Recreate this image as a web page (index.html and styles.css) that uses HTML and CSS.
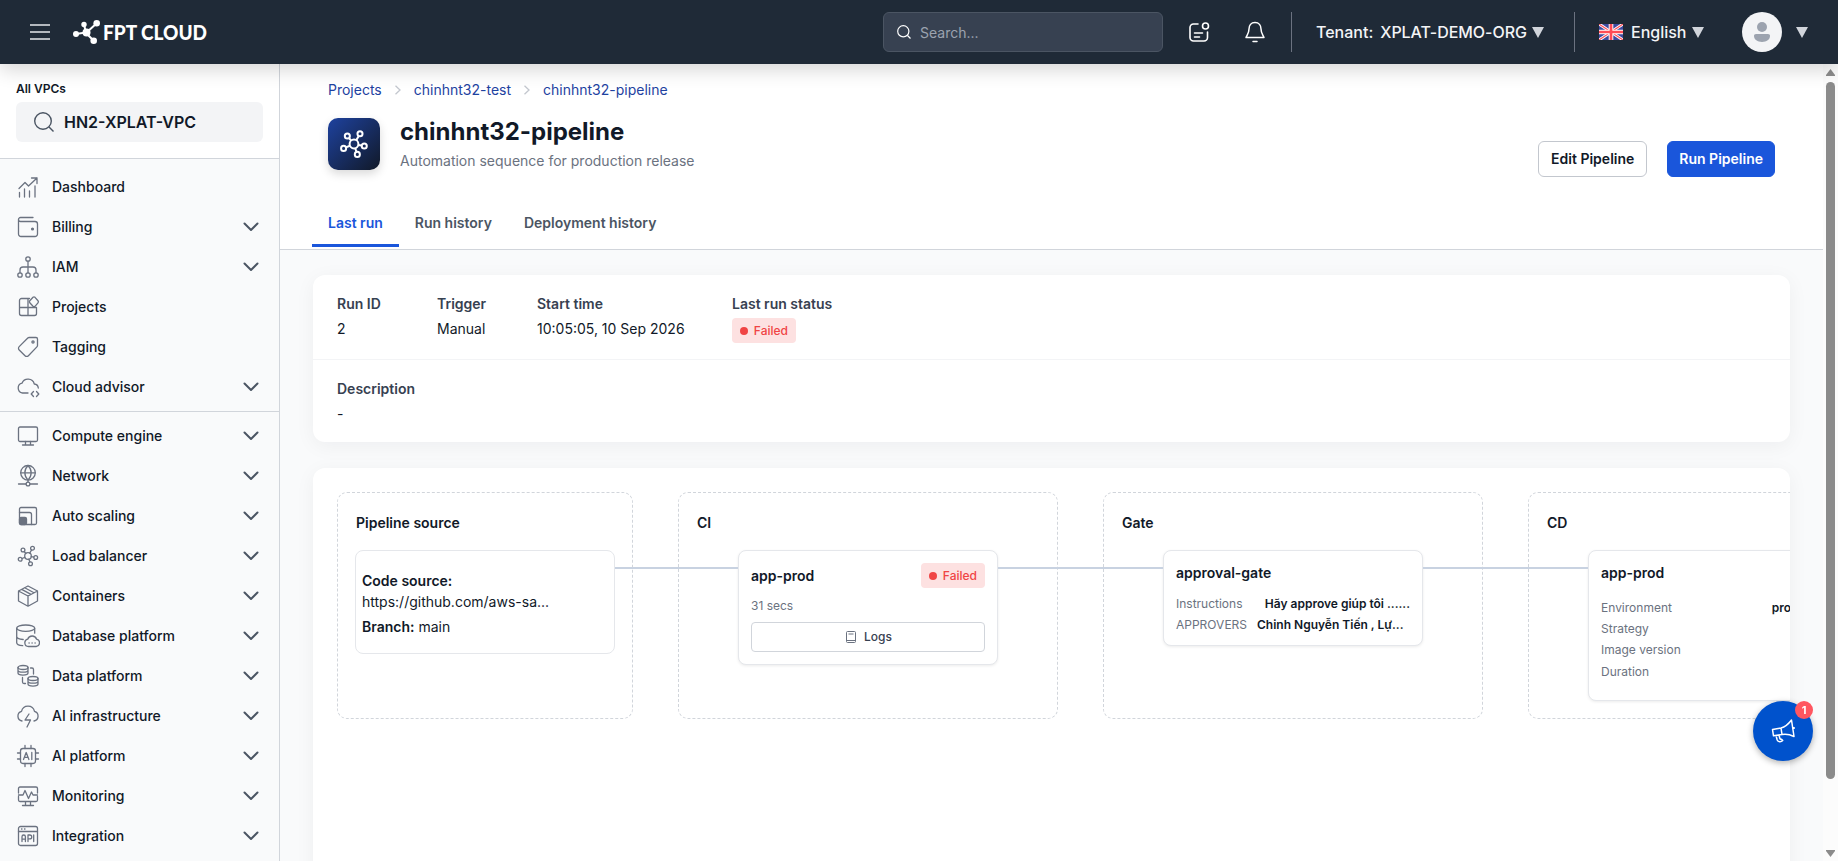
FILE: index.html
```
<!DOCTYPE html>
<html lang="en">

<head>
  <meta charset="UTF-8">
  <meta name="viewport" content="width=device-width, initial-scale=1.0">
  <title>chinhnt32-pipeline - FPT Cloud</title>
  <link rel="stylesheet" href="styles.css">
</head>

<body>
  <!-- Shared icons -->
  <svg class="sprite" width="0" height="0">
    <symbol id="chevron" viewBox="0 0 16 10"><path d="M1.500 1.500L8 8l6.500-6.500" fill="none" stroke="currentColor" stroke-width="2" stroke-linecap="round" stroke-linejoin="round"/></symbol>
    <symbol id="caret" viewBox="0 0 12 11"><path d="M0 0h12L6 11z" fill="currentColor"/></symbol>
    <symbol id="crumb" viewBox="0 0 8 10"><path d="M1.500 .8L6 5 1.500 9.200" fill="none" stroke="currentColor" stroke-width="1.300"/></symbol>
    <symbol id="hub" viewBox="0 0 24 24">
      <g fill="none" stroke="currentColor">
        <circle cx="12" cy="12" r="3.300"/><circle cx="7" cy="6" r="1.900"/><circle cx="16.500" cy="4.300" r="1.900"/><circle cx="19.700" cy="13.500" r="1.900"/><circle cx="14.500" cy="19.800" r="1.900"/><circle cx="4.200" cy="15.300" r="1.900"/>
        <path d="M8.200 7.500l1.700 2M15.600 6l-1.900 3.100M15.200 12.700l2.600.5M12.900 15.200l1 2.800M8.900 13.300l-2.900 1.200"/>
      </g>
    </symbol>
  </svg>

  <header class="topbar">
    <button class="menu-btn" aria-label="Menu">
      <svg width="20" height="16" viewBox="0 0 20 16" fill="none" stroke="#e5e7eb" stroke-width="1.300"><path d="M0 1h20M0 8h20M0 15h20"/></svg>
    </button>
    <a class="logo">
      <svg width="28" height="24" viewBox="0 0 28 24" fill="#fff" stroke="#fff">
        <circle cx="13.500" cy="12.500" r="4" stroke="none"/><circle cx="3" cy="14" r="3" stroke="none"/><circle cx="11" cy="4.500" r="2.700" stroke="none"/><circle cx="23.700" cy="3.300" r="3.300" stroke="none"/><circle cx="20.700" cy="20.700" r="3.300" stroke="none"/>
        <path d="M3 14l10-1.500L11 4.500M13 13L23.700 3.300M13 13l7.700 7.700" fill="none" stroke-width="2"/>
      </svg>
      <svg width="112" height="28" viewBox="0 0 112 28"><text class="logo-text" x="0" y="22" textLength="104" lengthAdjust="spacingAndGlyphs">FPT CLOUD</text></svg>
    </a>
    <div class="top-search">
      <svg width="14" height="14" viewBox="0 0 14 14" fill="none" stroke="#fff" stroke-width="1.200"><circle cx="6.300" cy="6.300" r="5.600"/><path d="M10.500 10.500l3 3"/></svg>
      <span>Search...</span>
    </div>
    <svg class="top-note" width="22" height="22" viewBox="0 0 22 22" fill="none" stroke="#fff" stroke-width="1.600" stroke-linecap="round">
      <path d="M10 3H5.500A3.500 3.500 0 0 0 2 6.500v10A3.500 3.500 0 0 0 5.500 20H16a3.500 3.500 0 0 0 3.500-3.500V11M6.500 12h8M6.500 16h5"/><circle cx="17.500" cy="5" r="3"/>
    </svg>
    <svg class="top-bell" width="22" height="22" viewBox="0 0 22 22" fill="none" stroke="#fff" stroke-width="1.500" stroke-linecap="round" stroke-linejoin="round">
      <path d="M11 1.500C7 1.500 5 4.500 5 8c0 4-1.500 5.500-3 8.500h18c-1.500-3-3-4.500-3-8.500 0-3.500-2-6.500-6-6.500zM9 20.500h4"/>
    </svg>
    <div class="tenant">
      <span>Tenant:</span>
      <span class="tenant-name">XPLAT-DEMO-ORG</span>
      <svg class="caret" width="12" height="11"><use href="#caret"/></svg>
    </div>
    <div class="lang">
      <svg width="24" height="16" viewBox="0 0 24 16">
        <path d="M0 0h24v16H0z" fill="#3d4a9e"/>
        <path d="M0 0l24 16M24 0L0 16" stroke="#fff" stroke-width="3"/><path d="M0 0l24 16M24 0L0 16" stroke="#ff4b55" stroke-width="1.100"/>
        <path d="M12 0v16M0 8h24" stroke="#fff" stroke-width="4.600"/><path d="M12 0v16M0 8h24" stroke="#ff4b55" stroke-width="2.700"/>
      </svg>
      <span>English</span>
      <svg class="caret" width="12" height="11"><use href="#caret"/></svg>
    </div>
    <div class="avatar">
      <svg width="16" height="20" viewBox="0 0 16 20" fill="#9ca3af"><circle cx="8" cy="5" r="5"/><path d="M2 12h12c1.200 0 2 .7 2 1.800 0 4-3.500 6.200-8 6.200s-8-2.200-8-6.200C0 12.700.8 12 2 12z"/></svg>
    </div>
    <svg class="caret" width="12" height="11"><use href="#caret"/></svg>
  </header>

  <div class="layout">
    <aside class="sidebar">
      <div class="vpc">
        <div class="vpc-label">All VPCs</div>
        <div class="vpc-select">
          <svg width="20" height="20" viewBox="0 0 20 20" fill="none" stroke="#4b5563" stroke-width="1.400"><circle cx="9" cy="9" r="8.300"/><path d="M15 15l4.500 4.500"/></svg>
          <span>HN2-XPLAT-VPC</span>
        </div>
      </div>
      <ul class="nav">
        <li><svg class="ico" viewBox="0 0 24 24"><path d="M3.500 22v-4.500M8.500 22v-8M13.500 22v-6M19 22V11M3 13.500l6-6 3.500 3.500L21 3M15.500 3H21v5.500"/></svg><span>Dashboard</span></li>
        <li><svg class="ico" viewBox="0 0 24 24"><path d="M17 2.500H4.500a2 2 0 0 0 0 4H19a2.500 2.500 0 0 1 2.500 2.500v10a2.500 2.500 0 0 1-2.500 2.500H5A2.500 2.500 0 0 1 2.500 19V4.500"/><circle cx="16.500" cy="14" r=".9" fill="currentColor"/></svg><span>Billing</span><svg class="chev"><use href="#chevron"/></svg></li>
        <li><svg class="ico" viewBox="0 0 24 24"><circle cx="12" cy="4" r="2.200"/><circle cx="4" cy="20" r="2.200"/><circle cx="12" cy="20" r="2.200"/><circle cx="20" cy="20" r="2.200"/><path d="M12 6.200v11.600M4 17.800V15a3 3 0 0 1 3-3h10a3 3 0 0 1 3 3v2.800"/></svg><span>IAM</span><svg class="chev"><use href="#chevron"/></svg></li>
        <li><svg class="ico" viewBox="0 0 24 24"><path d="M13.500 3.500h-8a2 2 0 0 0-2 2v13a2 2 0 0 0 2 2h13a2 2 0 0 0 2-2V12.500h-17M12 3.500v17"/><path d="M17 2.300l-3.200 3.500a1.500 1.500 0 0 0 0 2l3.200 3.500a1.500 1.500 0 0 0 2 0l3-3.500a1.500 1.500 0 0 0 0-2l-3-3.500a1.500 1.500 0 0 0-2 0z" fill="#f9fafb"/></svg><span>Projects</span></li>
        <li><svg class="ico" viewBox="0 0 24 24"><path d="M13.200 2.500H20A1.500 1.500 0 0 1 21.500 4v6.500a2 2 0 0 1-.6 1.400l-8.500 8.800a2.400 2.400 0 0 1-3.400 0L3.200 15a2.400 2.400 0 0 1 0-3.400L11.800 3a2 2 0 0 1 1.400-.5z"/><circle cx="17" cy="7" r="1.100"/></svg><span>Tagging</span></li>
        <li><svg class="ico" viewBox="0 0 24 24"><path d="M12 18H6.500A5 5 0 0 1 6 8.200 6.500 6.500 0 0 1 18.300 9a4.500 4.500 0 0 1 4 4M17.500 16.500l-2.300 2.500 2.300 2.500M20.500 16.500l2.300 2.500-2.300 2.500"/></svg><span>Cloud advisor</span><svg class="chev"><use href="#chevron"/></svg></li>
      </ul>
      <ul class="nav services">
        <li><svg class="ico" viewBox="0 0 24 24"><rect x="2.500" y="3" width="19" height="14.500" rx="1.500"/><path d="M9.500 17.500V21M14.500 17.500V21M6.500 21h11"/></svg><span>Compute engine</span><svg class="chev"><use href="#chevron"/></svg></li>
        <li><svg class="ico" viewBox="0 0 24 24"><circle cx="12" cy="8.800" r="7.300"/><path d="M4.700 8.800h14.600M12 1.500c-4.200 4.200-4.200 10.400 0 14.600M12 1.500c4.200 4.200 4.200 10.400 0 14.600M12 16.100v2M2.500 20H10M14 20h7.500"/><circle cx="12" cy="20" r="1.900"/></svg><span>Network</span><svg class="chev"><use href="#chevron"/></svg></li>
        <li><svg class="ico" viewBox="0 0 24 24"><rect x="3.500" y="3.500" width="17" height="17" rx="1.500"/><path d="M3.500 8.500h10a2 2 0 0 1 2 2v10"/><rect x="3.500" y="13.500" width="7" height="7" rx="1.500" fill="currentColor"/></svg><span>Auto scaling</span><svg class="chev"><use href="#chevron"/></svg></li>
        <li><svg class="ico"><use href="#hub"/></svg><span>Load balancer</span><svg class="chev"><use href="#chevron"/></svg></li>
        <li><svg class="ico" viewBox="0 0 24 24"><path d="M12 2l9.500 5v10L12 22.200 2.500 17V7zM2.500 7l9.500 5 9.500-5M12 12v10.200M8.700 3.800l9.300 5M5.700 5.400l9.300 5"/></svg><span>Containers</span><svg class="chev"><use href="#chevron"/></svg></li>
        <li><svg class="ico" viewBox="0 0 24 24"><ellipse cx="9.700" cy="4.200" rx="9" ry="3.200"/><path d="M.7 4.200v14.500c0 1.500 2 2.600 6 3M18.700 4.200v5M.7 12.500c0 1.500 2.500 2.600 6.500 3M12.500 22.500a3.700 3.700 0 0 1-.8-7.300 4.700 4.700 0 0 1 8.900 0 3.700 3.700 0 0 1-.4 7.300z"/><path d="M13 19h.2M16 19h.2M19 19h.2"/></svg><span>Database platform</span><svg class="chev"><use href="#chevron"/></svg></li>
        <li><svg class="ico" viewBox="0 0 24 24"><ellipse cx="7" cy="3.500" rx="5" ry="2"/><path d="M2 3.500v5.600c0 2.600 10 2.600 10 0V3.500M2 6.200c0 2.600 10 2.600 10 0"/><ellipse cx="17" cy="14.500" rx="5" ry="2"/><path d="M12 14.500v5.600c0 2.600 10 2.600 10 0v-5.600M12 17.200c0 2.600 10 2.600 10 0M14.500 4H16a1.500 1.500 0 0 1 1.500 1.500V10M6.500 13.500V18A1.500 1.500 0 0 0 8 19.500h1.500"/></svg><span>Data platform</span><svg class="chev"><use href="#chevron"/></svg></li>
        <li><svg class="ico" viewBox="0 0 24 24"><path d="M6 17A5 5 0 0 1 5.500 7.300a6.700 6.700 0 0 1 13 0A5 5 0 0 1 18 17M13 10l-4 6h5.500L11 23"/></svg><span>AI infrastructure</span><svg class="chev"><use href="#chevron"/></svg></li>
        <li><svg class="ico" viewBox="0 0 24 24"><rect x="4.500" y="4.500" width="15" height="15" rx="2.500"/><path d="M9 4.500v-3M15 4.500v-3M9 22.500v-3M15 22.500v-3M1.500 9h3M1.500 15h3M19.500 9h3M19.500 15h3M7.500 15.500l2.700-7 2.700 7M8.400 13.300H12M15.800 8.500v7"/></svg><span>AI platform</span><svg class="chev"><use href="#chevron"/></svg></li>
        <li><svg class="ico" viewBox="0 0 24 24"><path d="M2.500 9V4.500A1.500 1.500 0 0 1 4 3h16a1.500 1.500 0 0 1 1.500 1.500V9M2.500 12.500V16A1.500 1.500 0 0 0 4 17.500h16a1.500 1.500 0 0 0 1.500-1.500v-3.500M9.500 17.500V21M14.500 17.500V21M6.500 21.500h11M2.500 11H7l2-4.500 3.500 8L15.500 8l1.500 3h4.500"/></svg><span>Monitoring</span><svg class="chev"><use href="#chevron"/></svg></li>
        <li><svg class="ico" viewBox="0 0 24 24"><rect x="2.500" y="2.500" width="19" height="19" rx="2"/><path d="M2.500 7.500h19M5.500 5h.5M8.500 5H9M6 17.500v-4.800a1.700 1.700 0 0 1 3.400 0v4.800M6 15.200h3.400M12 17.500V11h1.800a1.900 1.900 0 0 1 0 3.900H12M17.700 11v6.500"/></svg><span>Integration</span><svg class="chev"><use href="#chevron"/></svg></li>
      </ul>
    </aside>

    <main class="main">
      <section class="page-head">
        <nav class="breadcrumb">
          <a>Projects</a>
          <svg width="8" height="10"><use href="#crumb"/></svg>
          <a>chinhnt32-test</a>
          <svg width="8" height="10"><use href="#crumb"/></svg>
          <a>chinhnt32-pipeline</a>
        </nav>
        <div class="title-row">
          <div class="title-icon"><svg width="32" height="32"><use href="#hub"/></svg></div>
          <div class="title-text">
            <h1>chinhnt32-pipeline</h1>
            <p>Automation sequence for production release</p>
          </div>
          <div class="actions">
            <button class="btn">Edit Pipeline</button>
            <button class="btn primary">Run Pipeline</button>
          </div>
        </div>
        <div class="tabs">
          <a class="tab active">Last run</a>
          <a class="tab">Run history</a>
          <a class="tab">Deployment history</a>
        </div>
      </section>

      <section class="card summary">
        <div class="summary-row">
          <div class="field"><label>Run ID</label><span>2</span></div>
          <div class="field"><label>Trigger</label><span>Manual</span></div>
          <div class="field start"><label>Start time</label><span>10:05:05, 10 Sep 2026</span></div>
          <div class="field"><label>Last run status</label><span class="badge">Failed</span></div>
        </div>
        <div class="summary-row description">
          <div class="field"><label>Description</label><span>-</span></div>
        </div>
      </section>

      <section class="card pipeline">
        <div class="stage source">
          <h3>Pipeline source</h3>
          <div class="node">
            <p><b>Code source:</b></p>
            <p>https://github.com/aws-sa...</p>
            <p class="branch"><b>Branch:</b> main</p>
          </div>
        </div>
        <div class="stage">
          <h3>CI</h3>
          <div class="node">
            <div class="node-head"><h4>app-prod</h4><span class="badge">Failed</span></div>
            <div class="duration">31 secs</div>
            <button class="logs">
              <svg width="10" height="12" viewBox="0 0 10 12" fill="none" stroke="#6b7280"><rect x=".5" y=".5" width="9" height="11" rx="1"/><path d="M2.500 3h5M.5 9.500h9"/></svg>
              Logs
            </button>
          </div>
        </div>
        <div class="stage">
          <h3>Gate</h3>
          <div class="node gate">
            <h4>approval-gate</h4>
            <dl>
              <div><dt>Instructions</dt><dd>Hãy approve giúp tôi ......</dd></div>
              <div class="approvers"><dt>APPROVERS</dt><dd>Chinh Nguyễn Tiến , Lự...</dd></div>
            </dl>
          </div>
        </div>
        <div class="stage">
          <h3>CD</h3>
          <div class="node deploy">
            <h4>app-prod</h4>
            <dl>
              <div><dt>Environment</dt><dd>production</dd></div>
              <div><dt>Strategy</dt></div>
              <div><dt>Image version</dt></div>
              <div class="last"><dt>Duration</dt></div>
            </dl>
          </div>
        </div>
      </section>
    </main>

    <div class="scrollbar">
      <svg width="9" height="7" viewBox="0 0 9 7"><path d="M4.500 0L9 6v1H0V6z" fill="#8b8b8b"/></svg>
      <div class="thumb"></div>
      <svg class="down" width="9" height="7" viewBox="0 0 9 7"><path d="M4.500 7L9 1V0H0v1z" fill="#8b8b8b"/></svg>
    </div>
  </div>

  <button class="fab" aria-label="Announcements">
    <svg width="24" height="24" viewBox="0 0 24 24" fill="none" stroke="#fff" stroke-width="1.500" stroke-linejoin="round"><path d="M1.500 10.500l8.500-1.500c4-1 7.500-4 10.500-8l2.500 16.500c-4-2-8-2.700-12-2l-8.500 1.300zM10 9l1 6.500M23 8v2M5 16.500l1.200 4.500c.8 2.200 4 2.200 5.500.6l-1.200-1.400c-1 .2-1.500-.2-1.700-1l-.8-3.200"/></svg>
    <span class="fab-count">1</span>
  </button>
</body>

</html>
```
FILE: styles.css
```
* {
  box-sizing: border-box;
}

body {
  margin: 0;
  height: 100vh;
  overflow: hidden;
  display: flex;
  flex-direction: column;
  font-family: "Inter", "Noto Sans", sans-serif;
  font-size: 14px;
  line-height: 21px;
  color: #111928;
  background-color: #f9fafb;
}

h1, h3, h4, p, ul, dl, dd {
  margin: 0;
  padding: 0;
}

button {
  font-family: inherit;
}

svg {
  flex: none;
}

.sprite {
  position: absolute;
}

/* Top bar */
.topbar {
  flex: none;
  display: flex;
  align-items: center;
  height: 64px;
  padding: 0 30px;
  background-color: #1f2a37;
  box-shadow: 0 6px 18px rgba(0, 0, 0, 0.16);
  color: #f3f4f6;
  font-size: 16px;
  font-weight: 500;
  position: relative;
  z-index: 2;
}

.menu-btn {
  display: flex;
  padding: 0;
  border: 0;
  background: none;
}

.logo {
  display: flex;
  align-items: center;
  gap: 2px;
  margin-left: 23px;
}

.logo-text {
  font-family: "Lato", sans-serif;
  font-size: 21px;
  font-weight: 900;
  fill: #fff;
}

.top-search {
  display: flex;
  align-items: center;
  gap: 9px;
  width: 280px;
  height: 40px;
  margin-left: auto;
  padding: 0 13px;
  border: 1px solid #4b5563;
  border-radius: 6px;
  background-color: #374151;
  color: #9ca3af;
  font-size: 14px;
  font-weight: 400;
}

.top-note {
  margin-left: 25px;
}

.top-bell {
  margin-left: 34px;
}

.tenant,
.lang {
  display: flex;
  align-items: center;
  height: 40px;
  border-left: 1px solid #6b7280;
}

.tenant {
  width: 283px;
  margin-left: 25px;
  padding-left: 24px;
}

.tenant-name {
  margin-left: 7px;
  letter-spacing: -0.05px;
}

.tenant .caret,
.lang .caret {
  margin-left: 5px;
}

.lang {
  width: 168px;
  padding-left: 24px;
}

.lang span {
  margin-left: 8px;
}

.caret {
  color: #d1d5db;
}

.avatar {
  display: flex;
  align-items: center;
  justify-content: center;
  width: 40px;
  height: 40px;
  margin-right: 14px;
  border-radius: 50%;
  background-color: #f3f4f6;
}

.layout {
  flex: 1;
  display: flex;
  min-height: 0;
}

/* Sidebar */
.sidebar {
  flex: none;
  width: 280px;
  border-right: 1px solid #d1d5db;
  background-color: #f9fafb;
  overflow: hidden;
}

.vpc {
  height: 95px;
  padding: 16px 16px 0;
  border-bottom: 1px solid #d1d5db;
  background-color: #fff;
}

.vpc-label {
  height: 22px;
  line-height: 18px;
  font-size: 12px;
  font-weight: 600;
}

.vpc-select {
  display: flex;
  align-items: center;
  gap: 10px;
  height: 40px;
  padding-left: 18px;
  border-radius: 6px;
  background-color: #f3f4f6;
  font-size: 16px;
  font-weight: 600;
}

.nav {
  padding: 8px 20px 4px 16px;
  list-style: none;
}

.nav.services {
  padding-top: 4px;
  border-top: 1px solid #d1d5db;
}

.nav li {
  display: flex;
  align-items: center;
  gap: 12px;
  height: 40px;
  font-weight: 500;
}

.nav span {
  padding-bottom: 1px;
}

.ico {
  width: 24px;
  height: 24px;
  color: #6b7280;
  fill: none;
  stroke: #6b7280;
  stroke-width: 1.3;
  stroke-linecap: round;
  stroke-linejoin: round;
}

.chev {
  width: 16px;
  height: 10px;
  margin-left: auto;
  color: #4b5563;
}

/* Main */
.main {
  flex: 1;
  display: flex;
  flex-direction: column;
  min-width: 0;
  overflow: hidden;
}

.page-head {
  flex: none;
  height: 186px;
  padding: 15px 48px 0;
  border-bottom: 1px solid #d1d5db;
  background-color: #fff;
}

.breadcrumb {
  display: flex;
  align-items: center;
  gap: 12px;
  color: #1e429f;
}

.breadcrumb svg {
  color: #c3c7ce;
}

.title-row {
  display: flex;
  margin-top: 18px;
}

.title-icon {
  display: flex;
  align-items: center;
  justify-content: center;
  width: 52px;
  height: 52px;
  margin-right: 20px;
  border-radius: 10px;
  background: linear-gradient(135deg, #1e429f, #111928);
  box-shadow: 0 4px 10px rgba(0, 0, 0, 0.15);
  color: #fff;
  stroke-width: 1.5;
}

.title-text h1 {
  line-height: 27px;
  font-size: 24px;
  font-weight: 700;
}

.title-text p {
  margin-top: 5px;
  color: #6b7280;
}

.actions {
  display: flex;
  gap: 20px;
  margin: 23px 0 0 auto;
}

.btn {
  height: 36px;
  padding: 0 12px 2px;
  border: 1px solid #c3c7ce;
  border-radius: 6px;
  background-color: #fff;
  color: #111928;
  font-size: 14px;
  font-weight: 600;
}

.btn.primary {
  padding: 0 11px 2px;
  border-color: #1a56db;
  background-color: #1a56db;
  color: #fff;
}

.tabs {
  display: flex;
  margin: 24px 0 0 -16px;
}

.tab {
  height: 46px;
  padding: 11px 16px 0;
  border-bottom: 3px solid transparent;
  color: #4b5563;
  font-weight: 600;
}

.tab.active {
  border-color: #1a56db;
  color: #1a56db;
}

.card {
  margin: 25px 33px 0;
  border-radius: 12px;
  background-color: #fff;
  box-shadow: 0 4px 20px rgba(17, 25, 40, 0.05);
}

.summary {
  flex: none;
  height: 167px;
}

.summary-row {
  display: flex;
  height: 85px;
  padding: 18px 24px 0;
  border-bottom: 1px solid #f3f4f6;
}

.summary-row.description {
  height: 82px;
  border: 0;
}

.field {
  width: 100px;
}

.field.start {
  width: 195px;
}

.field label {
  display: block;
  white-space: nowrap;
  color: #374151;
  font-weight: 600;
}

.field span {
  margin-top: 4px;
  display: block;
}

.badge {
  display: flex;
  align-items: center;
  gap: 6px;
  height: 25px;
  padding: 0 8px;
  border-radius: 4px;
  background-color: #fde1e1;
  color: #f04444;
  font-size: 12px;
  font-weight: 500;
}

.field .badge {
  display: flex;
  width: 64px;
  margin-top: 4px;
}

.badge::before {
  content: "";
  width: 8px;
  height: 8px;
  border-radius: 50%;
  background-color: #f04444;
}

/* Pipeline stages */
.pipeline {
  flex: none;
  display: flex;
  align-items: flex-start;
  gap: 45px;
  height: 500px;
  padding: 24px;
  overflow: hidden;
}

.pipeline.card {
  margin-top: 26px;
}

.stage {
  flex: none;
  width: 380px;
  height: 227px;
  padding: 19px 18px;
  border: 1px dashed #d1d5db;
  border-radius: 10px;
}

.stage.source {
  width: 296px;
  padding: 19px 17px;
}

.stage h3 {
  font-size: 14px;
  font-weight: 600;
  line-height: 22px;
  margin-bottom: 16px;
}

.source h3 {
  padding-left: 1px;
}

.node {
  position: relative;
  width: 260px;
  height: 115px;
  margin-left: 41px;
  padding: 12px;
  border: 1px solid #e5e7eb;
  border-radius: 8px;
  background-color: #fff;
  box-shadow: 0 1px 3px rgba(0, 0, 0, 0.08);
}

/* connector running into the node from the previous one */
.stage + .stage .node::before {
  content: "";
  position: absolute;
  top: 16px;
  right: 259px;
  width: 165px;
  height: 2px;
  background-color: #c8d2e1;
}

.stage.source + .stage .node::before {
  width: 123px;
}

.source .node {
  height: 104px;
  margin-left: 0;
  padding: 19px 6px;
  box-shadow: none;
}

.node b {
  font-weight: 600;
}

.branch {
  margin-top: 4px;
}

.node h4 {
  font-size: 14px;
  font-weight: 600;
}

.node-head {
  display: flex;
  align-items: center;
  justify-content: space-between;
}

.duration {
  margin-top: 7px;
  color: #6b7280;
  font-size: 12px;
}

.logs {
  display: flex;
  align-items: center;
  justify-content: center;
  gap: 8px;
  width: 100%;
  height: 30px;
  margin-top: 6px;
  padding: 0 0 1px 2px;
  border: 1px solid #d1d5db;
  border-radius: 4px;
  background-color: #fff;
  color: #374151;
  font-size: 12px;
  font-weight: 500;
}

.gate,
.deploy {
  padding-top: 11px;
}

.gate {
  height: 96px;
}

.deploy {
  height: 151px;
}

.node dl {
  margin-top: 10px;
  font-size: 12px;
}

.deploy dl {
  margin-top: 14px;
}

.node dl div {
  display: flex;
  justify-content: space-between;
  white-space: nowrap;
}

.node dl .approvers {
  justify-content: flex-start;
  gap: 10px;
}

.node dl .last {
  margin-top: 1px;
}

.node dt {
  color: #6b7280;
}

.node dd {
  font-weight: 600;
}

.scrollbar {
  flex: none;
  display: flex;
  flex-direction: column;
  align-items: center;
  width: 15px;
  padding: 5px 0 4px;
  background-color: #fcfcfc;
}

.thumb {
  width: 9px;
  height: 697px;
  margin-top: 6px;
  border-radius: 5px;
  background-color: #8b8b8b;
}

.scrollbar .down {
  margin-top: auto;
}

/* Floating announcement button */
.fab {
  position: fixed;
  right: 25px;
  bottom: 100px;
  z-index: 3;
  display: flex;
  align-items: center;
  justify-content: center;
  width: 60px;
  height: 60px;
  border: 0;
  border-radius: 50%;
  background-color: #0052cc;
  box-shadow: 0 2px 6px rgba(0, 0, 0, 0.3);
}

.fab-count {
  position: absolute;
  top: 0;
  right: 0;
  width: 18px;
  height: 18px;
  border-radius: 50%;
  background-color: #ff5660;
  color: #fff;
  font-size: 11px;
  font-weight: 700;
  line-height: 18px;
}
```
